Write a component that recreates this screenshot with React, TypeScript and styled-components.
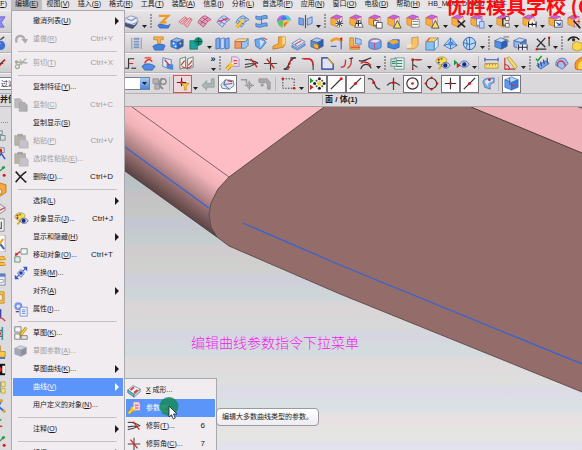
import React, { ReactNode } from 'react';
import styled, { createGlobalStyle, css } from 'styled-components';

const Global = createGlobalStyle`
  * { box-sizing: border-box; }
  body { margin: 0; background: #dad8da; }
  button, select { font: inherit; color: inherit; }
`;

/* ---------- drawing helpers ---------- */

const f = (d: string, fill: string, stroke = 'none') => <path d={d} fill={fill} stroke={stroke} strokeWidth={0.7} />;
const l = (d: string, stroke: string, w = 1.2) => <path d={d} fill="none" stroke={stroke} strokeWidth={w} />;
const dot = (x: number, y: number, r = 1.3, c = '#d81818') => <circle cx={x} cy={y} r={r} fill={c} />;
const cube = (top: string, left: string, right: string, edge = '#4a5a80') => (
  <>
    {f('M2 6 8 3 15 5 9 8Z', top, edge)}
    {f('M2 6 9 8V15L2 12.5Z', left, edge)}
    {f('M9 8 15 5V12L9 15Z', right, edge)}
  </>
);
const mold = (extra: ReactNode) => (
  <>
    {f('M2 5 8 2 14 4 9 7Z', '#cf5edb', '#9a3aa8')}
    {f('M2 5 9 7V15L2 12Z', '#f8ad3c', '#d27a18')}
    {f('M9 7 14 4V12L9 15Z', '#fbe3b4', '#b06ac0')}
    {extra}
  </>
);
const sheet = (a: string, b: string) => (
  <>
    {f('M2 10C5 4 8 3 10 3L16 7C13 8 10 11 8 15Z', a, b)}
    {l('M4 8 11 12M7 5 13 9M5 12C7 8 10 6 13 5', b, 0.8)}
  </>
);

const glyphs: Record<string, ReactNode> = {
  funnel: <>{f('M4 4H16L12 10 15 15H8L9 9Z', '#8f8cf0', '#5a4fd0')}</>,
  ball: <>{dot(11, 11, 5, '#3c6fd0')}{dot(9, 9, 2, '#cfe2ff')}{l('M11 5 15 2', '#445', 1.4)}</>,
  redLine: <>{l('M5 14C10 14 11 8 16 5', '#c81f1f', 1.8)}{l('M7 9H14', '#444')}</>,
  tray: <>{f('M2 10 12 13 17 8 14 13 10 17 2 14Z', '#46557a')}{f('M2 6 8 3 15 5V10L9 12 2 10Z', '#e8edf8', '#6a78a8')}{l('M4 6 9 8 14 5', '#7e8fc5')}</>,
  spring: <>{f('M3 13C7 9 12 16 16 12L14 16H5Z', '#3f82e0', '#2a56a8')}{l('M4 3H14L7 10H12', '#ef9a22', 2.4)}</>,
  ribbonRed: <>{f('M2 9 8 4 11 6 5 12Z', '#f3c3cc', '#c04a60')}{f('M7 12 13 5 16 7 11 15Z', '#f3c3cc', '#c04a60')}{l('M4 10 10 5M9 13 15 6', '#d8445e', 0.8)}</>,
  sheetRed: sheet('#d9a6c8', '#b8304a'),
  sheetBlue: <>{sheet('#c8d2f8', '#5a66c4')}{l('M3 9 14 6', '#e23a3a')}</>,
  sheetWrench: <>{sheet('#a8c8f4', '#3a64b8')}{l('M3 15 8 9', '#c8960f', 3.4)}{l('M3 15 8 9', '#fbd23c', 2)}{dot(9, 8, 2, '#fbd23c')}</>,
  flow: <>{f('M3 3C8 6 11 1 15 3V6C11 5 8 9 3 6Z', '#6aa5ee', '#2f62b0')}{f('M3 11C8 14 11 9 15 11V14C11 13 8 17 3 14Z', '#6aa5ee', '#2f62b0')}{l('M9 5V12', '#e04040', 1)}</>,
  rainbow: <>{f('M2 9C2 4 6 2 10 2L9 8Z', '#b070dc')}{f('M9 8 10 2C14 2 17 5 17 8Z', '#48c4e4')}{f('M2 9 9 8 8 16 4 13Z', '#58c868')}{f('M9 8H17L13 12 8 16Z', '#f3c93a')}{f('M6 5 10 3 13 6 9 8Z', '#4a78e4')}{f('M9 11 14 9 10 15Z', '#ee6a3c')}</>,
  mirror: <>{f('M2 5 7 6V13L2 12Z', '#76a5ec', '#3860b0')}{f('M11 6 16 4V11L11 13Z', '#a8c8f6', '#3860b0')}{l('M9 2V16', '#456')}</>,
  moldFan: mold(<>{dot(11, 11, 3.8, '#fff')}{l('M11 7V15M7 11H15M8 8 14 14M14 8 8 14', '#555', 1.1)}</>),
  moldMan: mold(<>{f('M7 15 10 8H13L16 15Z', '#fff', '#333')}{l('M11 8V14M8 11H14', '#333')}</>),
  moldCopy: mold(<>{f('M7 8H12V13H7Z', '#fff', '#222')}{f('M10 10H16V16H10Z', '#fff', '#222')}</>),
  moldTri: mold(f('M8 16 12 8 16 16Z', '#f5e06a', '#222')),
  moldBox: mold(<>{f('M7 7H15V15H7Z', '#fff', '#666')}{l('M8 9H14M8 12H14', '#888')}</>),
  moldCut: mold(<>{l('M8 8 16 15M16 8 8 15', '#222', 1.6)}</>),
  moldPage: mold(<>{f('M8 6H13V13H8Z', '#e8f1ff', '#4068b0')}{f('M11 9H16V16H11Z', '#bcd4fa', '#4068b0')}</>),
  moldTree: mold(<>{f('M11 4H15V8H11ZM11 11H15V15H11Z', '#fff', '#333')}{l('M8 6V13H11M8 6H11', '#333')}</>),
  moldDim: mold(<>{f('M7 9H17V15H7Z', '#fff')}{l('M8 9V15M16 9V15M8 12H16M12 10V14', '#222')}</>),
  moldWin: mold(<>{f('M8 8H16V15H8Z', '#fff', '#222')}{l('M10 10 14 13M14 10V13H11', '#2850b0')}</>),
  moldMagic: mold(<>{l('M8 8 15 16', '#222', 1.8)}{l('M13 7V11M11 9H15', '#e03030', 0.9)}</>),

  coil: <>{l('M4 3V15M14 3V15', '#9090a8', 1)}{l('M6 4H12M6 7H12M6 10H12M6 13H12', '#7f98c0', 2)}</>,
  punch: <>{f('M3 12C7 9 12 9 16 11L14 16H5Z', '#3f82e0', '#2a56a8')}{f('M4 2H14V5H11V9H8V5H4Z', '#f7b544', '#c07a18')}</>,
  pegCube: <>{cube('#8cbcf6', '#3f86e8', '#2b62c0')}{dot(5, 9, 1, '#fff')}{dot(7, 12, 1, '#fff')}{dot(12, 9, 1, '#fbd850')}</>,
  teal: <>{f('M2 6H10V15H2Z', '#1aa596', '#0c6458')}{dot(11, 7, 4.5, '#10917f')}{l('M11 3V11M7 7H15', '#083f39', 0.8)}</>,
  panels: <>{f('M2 4 6 3V14L2 15Z', '#79acf1', '#2d5db0')}{f('M7 4 11 3V14L7 15Z', '#c1dafb', '#2d5db0')}{f('M12 4 16 3V14L12 15Z', '#79acf1', '#2d5db0')}</>,
  shell: <>{f('M2 6 6 4H16L13 7H2Z', '#fbd6a0', '#b88030')}{f('M2 7H9V14H2Z', '#ee9a60', '#a86030')}{f('M9 7H13L16 4V11L13 14H9Z', '#9cc4f2', '#3e68b0')}</>,
  twist: <>{f('M3 5 11 3 15 8 9 15 4 12Z', '#6fa8f0', '#2f62b0')}{f('M8 5 13 7 9 13Z', '#cfe2fb')}{l('M12 3 16 5', '#e04848')}</>,
  boot: <>{f('M8 2H15V9L13 13 2 15V12L8 9Z', '#f7a83a', '#b86a10')}{f('M12 2H15V9L12 11Z', '#fcd988')}</>,
  slab: <>{f('M2 9 10 4 16 7 8 12Z', '#dbe8fa', '#3e68b0')}{f('M2 11 8 14 16 9V11L8 16 2 13Z', '#86b2ee', '#3e68b0')}{l('M5 10 12 6', '#e04848')}</>,
  block: <>{cube('#a9cdf8', '#4a90e8', '#2b5fb8')}{f('M5 9 10 10V15L5 13Z', '#f8b648', '#a86a18')}</>,
  curveUp: <>{l('M3 7C7 3 11 3 15 7', '#f0a030', 3)}{l('M3 12H9M14 5V15', '#3f6ec8', 1.3)}{dot(14, 4)}</>,
  bracket: <>{f('M3 3H7V11H13V15H3Z', '#f6b048', '#b87820')}{f('M9 3 15 5V10L9 9Z', '#a8ccf6', '#3e68b0')}{l('M4 13 14 13', '#e04848')}</>,
  blueCyl: <>{f('M3 7C4 3 14 3 16 6V13C13 16 6 16 3 13Z', '#6ba3f0', '#2f56a8')}{f('M4 7C6 4 13 4 15 6 13 9 7 9 4 7Z', '#d8e6fb', '#d05070')}{l('M9 9V15', '#d05070')}</>,
  flagCube: <>{f('M3 8 8 5H15V13L10 15 3 13Z', '#4286e0', '#2652a0')}{f('M3 6 12 5 15 8 8 10Z', '#f6a93a')}</>,
  bend: <>{f('M8 3 15 2V10C14 14 9 16 3 14L5 11C8 12 9 9 8 3Z', '#f6c268', '#c08030')}{f('M3 10 8 9V13L3 14Z', '#fbe4b8')}</>,
  pocket: <>{f('M3 7H12V16H3Z', '#8dc0ee', '#306aa8')}{f('M3 7 7 3H16L12 7Z', '#fbcf70', '#c08530')}{f('M12 7 16 3V12L12 16Z', '#d8eafb', '#306aa8')}{l('M4 7 7 3', '#e05050')}</>,
  wedge: <>{f('M2 11 9 3 16 11 9 15Z', '#b8d6f8', '#2e62b0')}{l('M9 3V15M2 11 9 9 16 11', '#2e62b0', 0.9)}{f('M7 7H12V11H7Z', '#4a8ce6')}</>,
  sphere: <><circle cx="9" cy="9" r="6.5" fill="#bcd8f8" stroke="#2e62b0" />{l('M9 2V16M2 8 9 10 16 8M5 4C7 7 7 12 5 14', '#2e62b0', 0.9)}</>,
  offsetCube: <>{cube('#bcd8fa', '#4f90e8', '#2b60b8')}{l('M11 2H17M11 4 17 7', '#888', 1.4)}</>,
  dimCube: <>{cube('#bcd8fa', '#8cb8f2', '#4a80d0')}{f('M6 10H17V16H6Z', '#eef')}{l('M7 10V16M11 10V16M16 10V16M7 13H16', '#223', 1)}</>,
  measureX: <>{l('M3 4 12 13M12 3 3 13', '#333', 1.3)}{l('M3 15H13M16 3V12', '#333')}{dot(16, 3)}{dot(3, 15)}</>,
  eyeCube: <>{l('M2 6C5 1 11 1 14 5', '#222', 1.6)}{dot(8, 5, 1.8, '#333')}{f('M7 9 11 7 17 9V15L12 17 7 15Z', '#fbd64a', '#b08a18')}</>,

  stubs: <>{l('M3 14H8V4H14', '#333')}{l('M8 9H13', '#c83030')}{l('M11 14H16', '#333')}</>,
  stamp: <>{f('M2 12C6 8 12 9 16 12L13 16H5Z', '#4f8ee6', '#25509c')}{l('M5 9C7 4 11 4 13 7', '#d02c2c', 1.4)}{f('M5 2H12V4H5Z', '#eb6a5a')}</>,
  sheetArrow: <>{f('M4 3 13 5V15L4 12Z', '#dfe9fa', '#44598c')}{f('M8 9 15 10V16L8 14Z', '#4888e0')}{l('M6 5 11 11', '#e03434', 1.4)}</>,
  twoSheets: <>{f('M2 4 8 2V13L2 15Z', '#e6f0e4', '#426058')}{f('M10 4 16 2V13L10 15Z', '#e6f0e4', '#426058')}{l('M3 11 7 6M11 11 15 6M4 12C8 15 12 14 15 11', '#d03838')}</>,
  param: <>{f('M8 2H14L16 4V12H8Z', '#f6d3e0', '#8a7ac8')}{l('M10 6H14M10 9H14', '#d04868')}{l('M3 15 8 10', '#b07c08', 4)}{l('M3 15 8 10', '#fbd23c', 2.6)}{dot(8, 10, 2.6, '#f6c62a')}{dot(9, 9, 1, '#fff')}</>,
  trim: <>{l('M2 5C8 4 13 7 16 9M2 10C7 9 12 9 14 9M2 13C8 13 12 10 14 9', '#333', 1.2)}{l('M8 4 15 13', '#e02020', 1.4)}</>,
  trimCorner: <>{l('M2 9H16M9 2V16', '#444', 1.2)}{l('M5 4 13 14', '#e02020', 1.4)}</>,
  divide: <>{l('M3 15C10 15 7 3 15 3', '#333', 1.4)}{l('M10 3H16M3 15H8', '#333')}{dot(9, 9)}{dot(11, 5)}{dot(8, 13)}</>,
  fillet: <>{l('M2 4H8C13 4 14 8 14 16', '#444', 1.2)}{l('M4 4H8C13 4 14 8 14 11', '#e02020', 1.4)}</>,
  chamfer: <>{f('M3 3H9L15 9V15H3Z', '#dfe3f3', '#334')}{l('M3 15V3H9L15 10V15Z', '#3c50b0', 1.2)}{l('M9 3 15 10', '#d8a820', 1.2)}</>,
  stretch: <>{l('M3 13C8 13 8 9 8 5M10 14C15 11 14 7 14 3', '#d03030', 1.4)}{l('M12 4 16 3', '#333')}</>,
  smooth: <>{l('M2 6C7 8 10 4 15 3M4 15C6 9 12 8 15 14', '#333', 1.3)}{l('M4 9C8 6 12 8 15 11', '#e02020', 1.4)}</>,
  sheetList: <>{f('M6 3H16V15H6Z', '#e8f3ee', '#4d786e')}{l('M8 6H14M8 9H14M8 12H14', '#3a8a78')}{f('M2 4H8V12H2Z', '#c8e4da', '#4d786e')}{l('M3 7H7M3 9H7', '#3a8a78')}</>,
  axes: <>{l('M5 15V5H15M5 10 10 13', '#444', 1.2)}{dot(5, 5, 1.6)}{l('M8 5H13', '#d02828', 1.6)}{dot(5, 15, 1)}</>,
  palette: <>{f('M2 6C3 2 9 1 12 3 15 5 13 8 11 8 9 12 3 11 2 6Z', '#f9dc5c', '#a98518')}{dot(5, 5, 1.2)}{dot(8, 4, 1.2, '#2c9c40')}{dot(5, 8, 1.2, '#2a56d0')}{l('M5 15 11 8', '#e0a828', 2.2)}{f('M8 11C10 7 15 7 17 11 15 15 10 15 8 11Z', '#c4d6fb', '#2a3c88')}{dot(12, 11, 2.2, '#1c2c78')}</>,
  eyePlay: <>{f('M1 5 5 8 1 11Z', '#18a038')}{f('M4 8 8 11 4 14Z', '#d02828')}{f('M7 10C9 5 15 5 17 10 15 14 9 14 7 10Z', '#cdd9fa', '#2a3c88')}{dot(12, 10, 2.3, '#1c2c78')}</>,
  ruler: <>{f('M2 9H16V14H2Z', '#f7dc70', '#a88420')}{l('M2 5H16M2 3V7M16 3V7', '#3858b8')}{l('M4 9V11M7 9V11M10 9V11M13 9V11', '#8a6a18', 0.8)}</>,
  angle: <>{l('M3 3V15H14', '#c83030')}{f('M5 3 8 2 16 12 14 15Z', '#f7dc70', '#a88420')}{l('M3 10A5 5 0 0 1 8 15', '#c83030')}</>,
  combCheck: <>{f('M3 11 13 6 16 9 7 15Z', '#7ba8ec', '#2c4a98')}{l('M5 13 4 8M8 12 7 7M11 10 10 5M14 9 14 3', '#2c4a98')}{l('M2 4 4 6 8 1', '#14a030', 1.6)}</>,
  loop: <>{f('M3 11C2 5 8 2 13 4L16 9 10 15Z', '#9cc0f3', '#3458a8')}{l('M5 12C3 6 12 3 13 12', '#d83a4c', 1.5)}</>,
  flame: <>{f('M4 15C1 8 6 4 11 2L12 16Z', '#f49a22', '#d03a18')}{f('M7 15C5 11 8 7 11 6V15Z', '#fbe04a')}</>,

  greyLinks: <>{f('M2 4H8V9H2ZM4 10H9V15H4Z', '#b4b2b4', '#858385')}{l('M12 4A3 5 0 1 0 13 14', '#8d8b8d', 2)}<circle cx="13" cy="7" r="3" fill="none" stroke="#8d8b8d" strokeWidth="1.5" /></>,
  snapFilter: <>{l('M8 3V12M3 8H13', '#333')}{dot(8, 8, 1.6)}{f('M8 9H16L13 12V16H11V12Z', '#f9c930', '#c08a10')}</>,
  undo: <>{f('M2 11 7 6V9H12V4H15V13H7V16Z', '#a6b8b4', '#859894')}</>,
  selCube: <>{f('M2 10 7 5 15 6 16 11 11 15 3 14Z', '#dfe8f8', '#40527c')}{l('M7 5 5 10 11 15M5 10 14 9', '#40527c', 0.9)}{l('M9 6 14 7', '#d83030')}</>,
  target: <>{l('M3 5H9V9M12 6V16M7 11H17', '#9a989a', 1.4)}<circle cx="12" cy="11" r="2.6" fill="none" stroke="#9a989a" /></>,
  turn: <>{f('M2 4H11L14 8V15H11V10L9 8H2Z', '#a9a7a9', '#8d8b8d')}{f('M4 9H7V12H4Z', '#9a989a')}</>,
  marquee: <><rect x="3" y="4" width="12" height="10" fill="none" stroke="#333" strokeDasharray="1.5 1.5" />{dot(3, 4, 1.4)}{dot(15, 14, 1.4)}</>,
  snapAll: <>{f('M1 3 5 6 1 9Z', '#18a038')}{f('M1 10 5 13 1 16Z', '#d02828')}{dot(11, 9, 2.3, '#f0d030')}{dot(11, 4, 1.6, '#222')}{dot(11, 14, 1.6, '#222')}{dot(6, 9, 1.6, '#222')}{dot(16, 9, 1.6, '#222')}{dot(8, 6, 1.1, '#555')}{dot(14, 6, 1.1, '#555')}{dot(8, 12, 1.1, '#555')}{dot(14, 12, 1.1, '#555')}</>,
  endPt: <>{l('M3 15 14 4', '#333', 1.3)}{dot(14, 4, 1.6)}</>,
  midPt: <>{l('M3 15 15 3', '#333', 1.3)}{dot(9, 9, 1.6)}</>,
  ctrlPt: <>{l('M2 4C11 2 7 15 15 15', '#444', 1.3)}{dot(8, 8, 1.6)}</>,
  crossPt: <>{l('M2 11C6 7 11 7 16 11M9 3V16', '#444', 1.3)}{dot(9, 8, 1.6)}</>,
  centerPt: <><circle cx="9" cy="9" r="6" fill="none" stroke="#333" strokeWidth="1.2" />{dot(9, 9, 1.4)}</>,
  quadPt: <><circle cx="9" cy="9" r="5.5" fill="none" stroke="#333" strokeWidth="1.2" />{dot(9, 3)}{dot(9, 15)}{dot(3, 9)}{dot(15, 9)}</>,
  plusPt: <>{l('M3 9H15M9 3V15', '#333', 1.2)}{dot(9, 9, 1.4)}</>,
  facePt: <>{f('M3 7C5 2 11 4 15 3V8C11 9 10 11 11 15L5 13Z', '#7fb0ec', '#3966ac')}{f('M5 7C7 4 11 5 14 5L13 7C10 7 8 9 8 12Z', '#dbe9fb')}{dot(10, 5, 1.4)}</>,
  csysCube: <>{f('M2 5 9 2 16 5 9 8Z', '#aedcf8', '#2a62c0')}{f('M2 5 9 8V16L2 13Z', '#5a9cf2', '#2a62c0')}{f('M9 8 16 5V13L9 16Z', '#3b78dc', '#2a62c0')}{l('M7 3V10L14 12', '#e03030', 1.1)}</>,

  redo: <>{l('M4 13C2 5 10 3 13 9', '#adaaad', 2.6)}{f('M9 9H17L14 14Z', '#adaaad')}</>,
  cut: <>{l('M6 12 15 4M8 5 10 11', '#b0b5a8', 1.6)}<circle cx="5" cy="13" r="2.2" fill="none" stroke="#a4aa9c" strokeWidth="1.4" />{dot(4, 8, 2, '#a4aa9c')}{l('M4 8 16 9', '#a4aa9c', 1.6)}</>,
  copy: <>{f('M2 2H8L10 4V12H2Z', '#bcbabc', '#a5a3a5')}{f('M7 6H13L16 9V16H7Z', '#b1afb1', '#a09ea0')}</>,
  paste: <>{f('M2 3H14V14H2Z', '#b5b4a6', '#a3a297')}{f('M5 1H11V4H5Z', '#a4a2a4')}{f('M7 7H14L17 10V17H7Z', '#c5c3c9', '#a9a7ab')}</>,
  del: <>{l('M3 3C7 7 11 12 15 15M15 3C10 6 6 11 3 15', '#222', 1.8)}</>,
  move: <>{f('M9 2H16V8H9Z', '#f3f6f2', '#355a50')}{f('M2 11H8V17H2Z', '#dcefe4', '#355a50')}{l('M3 9 8 5', '#e02a2a', 1.6)}{f('M2 10 3 6 6 9Z', '#e02a2a')}</>,
  transform: <>{l('M3 15 15 3', '#345ac8', 1.2)}{f('M11 2H16V7ZM2 11V16H7Z', '#345ac8')}{f('M5 9 9 5 13 9 9 14Z', '#c0cdf4', '#3a55b0')}{dot(9, 9, 2, '#2c3f98')}</>,
  props: <>{dot(6, 6, 4.5, '#7d95e6')}{dot(6, 6, 2, '#e4eafc')}{f('M8 7H16V17H8Z', '#f1f4ff', '#4963b8')}{l('M10 10H14M10 12H14M10 14H14', '#5d78cc', 0.9)}{l('M3 12H7', '#456', 1.4)}</>,
  sketch: <>{f('M2 2H9V8H2ZM2 10H8V16H2Z', '#f5f4f6', '#444')}{f('M9 12H16V16H9Z', '#e8e6ea', '#444')}{l('M8 12 15 3', '#a87d12', 3.2)}{l('M9 11 15 3', '#fbd23c', 1.8)}</>,
  sketchParam: cube('#ccd0d8', '#a4a8b2', '#8b8f9c', '#9ea2ac'),
  xform: <>{f('M2 9 8 4 16 8 9 14Z', '#e8f5fa', '#506880')}{f('M2 9 9 14V17L2 12Z', '#54bfd0', '#386070')}{f('M9 14 16 8V11L9 17Z', '#c8d4e0', '#506880')}{l('M5 9 9 6M9 12 13 9', '#e03838', 2)}</>,

  sTree: <>{f('M8 4H13V8H8ZM11 9H16V14H11Z', '#cfe3d8', '#5a7080')}{l('M9 8V12H11', '#b03050')}</>,
  sScreens: <>{f('M7 3H15V8H7Z', '#ffe9a0', '#3858c0')}{dot(11, 6, 2, '#c02c2c')}{l('M8 14 12 9 16 15', '#3858c0', 1.6)}{dot(9, 14, 1.6)}</>,
  sDots: <>{l('M6 11C10 10 12 6 16 4', '#3a8a4a', 1.2)}{dot(14, 5, 1.5, '#18a038')}{dot(9, 13, 1.6)}{dot(15, 13, 1.6)}</>,
  sCube: <>{f('M5 5 10 2 17 4V12L11 16 5 13Z', '#f8a838', '#a86410')}{f('M8 8 12 9V14L8 12Z', '#fff', '#a86410')}</>,
  sPlate: <>{f('M4 9 10 5 16 9V12L10 16 4 12Z', '#eadfe0', '#7e6d70')}{l('M4 9 10 12 16 9', '#b04a50')}</>,
  sFrame: <>{f('M6 2H15V15H6Z', '#f0f0f2', '#666')}{l('M12 5V12H8V7', '#555', 1.2)}</>,
  sTools: <>{f('M3 0H16V18H3Z', '#fafafa', '#888')}{l('M6 3 15 15', '#3c64c8', 2.2)}{l('M14 4 7 14', '#f0a828', 2.4)}</>,
  sWave: <>{l('M5 6C9 2 11 8 16 5M5 12C9 8 11 14 16 11', '#c07c10', 4)}{l('M5 6C9 2 11 8 16 5M5 12C9 8 11 14 16 11', '#fbbf3a', 2.6)}</>,
  sWin: <>{f('M5 3H16V15H5Z', '#e4e9f4', '#5a6a90')}{f('M5 3H16V6H5Z', '#5a7ec8')}{f('M8 9H14V12H8Z', '#fff', '#888')}</>,
  sRing: <>{f('M6 3H15V15H6Z', '#fbc23c', '#b07c10')}{f('M9 6H13V12H9Z', '#f2eee8', '#b07c10')}</>,
  sMark: <>{f('M7 3 12 2V12H7Z', '#3a48a8')}{l('M6 14C10 9 14 12 16 15', '#d04050', 1.6)}</>,
  sTeal: <>{l('M7 2V16M13 2V16', '#3a9aa8', 1.8)}{l('M7 6H13M7 12H13', '#667')}{dot(10, 9, 1.6)}</>,
  sStep: <>{f('M6 3H11V9H16V15H6Z', '#fbc84a', '#a87c18')}{l('M6 16H16', '#3a60c0', 1.6)}</>,
  sBlack: <>{f('M4 3H16V15H4Z', '#111')}{dot(10, 9, 2.6, '#e02828')}{f('M13 5H16V13H13Z', '#eee')}</>,
  sTag: <>{f('M6 3H11V14H6Z', '#e2e8e0', '#6a7868')}{f('M12 3H16V8H12ZM12 10H16V15H12Z', '#f6e37c', '#a89a40')}</>,
  sZig: <>{l('M5 4H12L9 10 15 15', '#2f70d8', 2)}{dot(12, 4, 1.7, '#f0a020')}{dot(15, 15, 1.7, '#f0a020')}</>,
  sPin: <>{l('M6 6 12 5', '#2fa048', 1.8)}{l('M7 12H13', '#c83838', 1.6)}</>,
};

const IconSvg = styled.svg`
  display: block;
  flex: none;
  width: 18px;
  height: 18px;
`;
const Icon = ({ name }: { name: string }) => (
  <IconSvg viewBox="0 0 18 18" aria-hidden="true">{glyphs[name]}</IconSvg>
);

/* ---------- frame ---------- */

const Page = styled.div`
  position: relative;
  display: flex;
  flex-direction: column;
  height: 100vh;
  overflow: hidden;
  background: #dad8da;
  color: #1c1a1c;
  font: 7px/10px 'Liberation Sans', 'Noto Sans CJK SC', sans-serif;
`;

const MenuBar = styled.nav`
  display: flex;
  flex: none;
  height: 10px;
  margin-left: -20px;
  background: #e6e4e6;
  white-space: nowrap;
`;
const MenuBarItem = styled.button<{ $open?: boolean }>`
  flex: none;
  height: 10px;
  padding: 0 4px 3px;
  border: 0;
  line-height: 7px;
  background: ${p => (p.$open ? '#bfbdc0' : 'transparent')};
`;

const Bar = styled.div<{ $tall?: boolean }>`
  display: flex;
  flex: none;
  align-items: center;
  height: ${p => (p.$tall ? 23 : 20)}px;
  border-bottom: 1px solid #b4b2b5;
  border-top: 1px solid #f2f1f3;
  background: linear-gradient(#e6e4e7, #cfcdd0);
`;
const FilterBar = styled(Bar)`
  height: 21px;
  background: #dad8da;
`;
const ToolButton = styled.button<{ $look?: 'box' | 'red' }>`
  display: flex;
  flex: none;
  align-items: center;
  justify-content: center;
  width: 19px;
  height: 18px;
  padding: 0;
  border: 0;
  background: transparent;

  svg { width: 17px; height: 17px; }
  ${p => p.$look === 'box' && css`background: #fbfbfc; box-shadow: inset 0 0 0 1px #77757a;`}
  ${p => p.$look === 'red' && css`background: #efd9dc; box-shadow: inset 0 0 0 1px #d8525c;`}
`;
const Lead = styled.div<{ $rest: number }>`
  display: flex;
  flex: none;
  width: ${p => p.$rest}px;
  overflow: hidden;
  & > button { margin-left: -11px; }
`;
const Space = styled.span`
  flex: none;
  width: 3px;
`;
const Divider = styled.span`
  flex: none;
  width: 4px;
  height: 14px;
  border-left: 1px solid #b9b7ba;
`;
const Grip = styled.span`
  flex: none;
  width: 6px;
  height: 15px;
  background: radial-gradient(circle at 1px 1px, #98969a 1px, transparent 1px) 2px 0 / 3px 3px repeat-y;
`;
const Drop = styled.button`
  display: flex;
  flex: none;
  align-items: flex-end;
  justify-content: center;
  width: 7px;
  height: 12px;
  padding: 0;
  border: 0;
  background: transparent;
`;
const Overflow = styled(Drop)`
  flex-direction: column;
  align-items: center;
  justify-content: space-between;
  width: 8px;
  height: 15px;
  margin-left: 13px;
  font: bold 9px/7px 'Liberation Sans', sans-serif;
`;
const TinySvg = styled.svg`
  display: block;
  width: 5px;
  height: 3px;
`;
const Down = () => <TinySvg viewBox="0 0 5 3" aria-hidden="true"><path d="M0 0H5L2.5 3Z" fill="#222" /></TinySvg>;

const Tools = ({ items }: { items: string }) => (
  <>
    {items.split(' ').map((t, i) => {
      if (t === '_') return <Space key={i} />;
      if (t === '|') return <Divider key={i} />;
      if (t === ':') return <Grip key={i} />;
      if (t === 'v') return <Drop key={i} aria-label="more"><Down /></Drop>;
      if (t === '>>') return <Overflow key={i} aria-label="overflow"><span>»</span><Down /></Overflow>;
      const look = t[0] === '+' ? 'box' : t[0] === '!' ? 'red' : undefined;
      const name = look ? t.slice(1) : t;
      return <ToolButton key={i} $look={look} aria-label={name}><Icon name={name} /></ToolButton>;
    })}
  </>
);

const FilterBox = styled.label`
  position: relative;
  flex: none;
  width: 150px;
`;
const FilterSelect = styled.select`
  appearance: none;
  display: block;
  width: 100%;
  height: 13px;
  padding: 0 1px;
  border: 1px solid #77809a;
  border-left: 0;
  border-radius: 0;
  background: #fff;
  line-height: 10px;
`;
const FilterArrow = styled.span`
  position: absolute;
  right: 1px;
  top: 1px;
  display: flex;
  align-items: center;
  justify-content: center;
  width: 9px;
  height: 11px;
  background: linear-gradient(#a8ccf6, #4a86d6);
  pointer-events: none;
`;

const StatusRow = styled.div`
  display: flex;
  flex: none;
  align-items: center;
  height: 13px;
  background: #dcdadc;
  border-bottom: 1px solid #a6a4a7;
  font-weight: bold;
  font-size: 8px;
`;
const Prompt = styled.span`
  width: 322px;
`;
const Status = styled.output`
  padding-left: 2px;
  border-left: 1px solid #b4b2b5;
`;

/* ---------- work area ---------- */

const Work = styled.main`
  display: flex;
  flex: 1;
  min-height: 0;
`;
const Strip = styled.aside`
  display: flex;
  flex: none;
  flex-direction: column;
  justify-content: space-between;
  align-items: flex-end;
  width: 11px;
  padding-top: 5px;
  padding-right: 3px;
  overflow: hidden;
  background: #dddbdd;

  & > button { height: 16px; }
`;
const StripGrip = styled.span`
  flex: none;
  width: 10px;
  margin: 10px 0 2px;
  border-top: 1px dotted #8a888c;
`;
const View = styled.section`
  position: relative;
  flex: 1;
  min-width: 0;
  background:
    repeating-linear-gradient(
      rgba(206, 208, 255, 0.2) 0 12px, rgba(190, 226, 236, 0.2) 12px 26px,
      rgba(246, 216, 224, 0.16) 26px 40px, rgba(222, 226, 214, 0.16) 40px 54px,
      rgba(206, 208, 255, 0.2) 54px 56px),
    linear-gradient(#a2a7aa, #b6babc 21%, #c7c8c8 39%, #d3d3d4 56%, #dcdcdd 77%, #e8e7e8);
`;
const Model = styled.svg`
  display: block;
  width: 100%;
  height: 100%;
`;
const Caption = styled.p`
  position: absolute;
  left: 180px;
  top: 225px;
  margin: 0;
  color: #ee22ee;
  font: 300 14px/20px 'Noto Sans CJK SC', sans-serif;
  white-space: nowrap;
`;
const Banner = styled.strong`
  position: absolute;
  left: 446px;
  top: -9px;
  color: #fb0d10;
  font: bold 20px/29px 'Noto Sans CJK SC', sans-serif;
  white-space: pre;
`;

/* ---------- menus ---------- */

const Menu = styled.ul`
  position: absolute;
  left: 11px;
  top: 10px;
  width: 114px;
  margin: 0;
  padding: 1px;
  border: 1px solid #aaa8ac;
  background: #f0ecf0;
  list-style: none;
`;
const SubMenu = styled(Menu)`
  left: 111px;
  top: 0;
  width: 93px;
  padding: 2px 1px;
`;
const Item = styled.li`
  position: relative;
`;
const Rule = styled.li`
  height: 6px;
  margin: 0 6px 0 5px;
  padding-top: 3px;

  &::after {
    content: '';
    display: block;
    border-top: 1px solid #c4c1c5;
  }
`;
const Entry = styled.button<{ $active?: boolean }>`
  display: grid;
  grid-template-columns: 18px 1fr auto 6px;
  align-items: center;
  width: 100%;
  height: 18px;
  padding: 0 4px 0 0;
  border: 0;
  text-align: left;
  white-space: nowrap;
  color: ${p => (p.$active ? '#fff' : '#1c1a1c')};
  background: ${p => (p.$active ? '#5b95fa' : 'transparent')};

  &:disabled { color: #a29fa3; }

  & > ${IconSvg} {
    width: 16px;
    height: 16px;
  }
`;
const Label = styled.span`
  padding-left: 2px;
`;
const Keys = styled.kbd`
  font: 8px/10px 'Liberation Sans', sans-serif;
`;
const Caret = styled.svg`
  width: 4px;
  height: 8px;
  justify-self: end;
`;
const Tip = styled.div`
  position: absolute;
  left: 91px;
  top: 29px;
  width: max-content;
  padding: 3px 5px;
  border: 1px solid #9b999d;
  border-radius: 4px;
  background: linear-gradient(#fff, #eeecf1);
  color: #222;
`;
const Pointer = styled.svg`
  position: absolute;
  left: 34px;
  top: 17px;
  width: 20px;
  height: 24px;
  pointer-events: none;
`;

type Row = { t: string; k?: string; icon?: string; off?: boolean; more?: boolean; keys?: string; sub?: boolean; dots?: boolean } | null;

const rows: Row[] = [
  { t: '撤消列表', k: 'U', more: true },
  { t: '重做', k: 'R', icon: 'redo', off: true, keys: 'Ctrl+Y' },
  null,
  { t: '剪切', k: 'T', icon: 'cut', off: true, keys: 'Ctrl+X' },
  null,
  { t: '复制特征', k: 'Y', dots: true },
  { t: '复制', k: 'C', icon: 'copy', off: true, keys: 'Ctrl+C' },
  { t: '复制显示', k: 'S' },
  { t: '粘贴', k: 'P', icon: 'paste', off: true, keys: 'Ctrl+V' },
  { t: '选择性粘贴', k: 'E', icon: 'paste', off: true, dots: true },
  { t: '删除', k: 'D', icon: 'del', dots: true, keys: 'Ctrl+D' },
  null,
  { t: '选择', k: 'L', more: true },
  { t: '对象显示', k: 'J', icon: 'palette', dots: true, keys: 'Ctrl+J' },
  { t: '显示和隐藏', k: 'H', more: true },
  { t: '移动对象', k: 'O', icon: 'move', dots: true, keys: 'Ctrl+T' },
  { t: '变换', k: 'M', icon: 'transform', dots: true },
  { t: '对齐', k: 'A', more: true },
  { t: '属性', k: 'I', icon: 'props', dots: true },
  null,
  { t: '草图', k: 'K', icon: 'sketch', dots: true },
  { t: '草图参数', k: 'A', icon: 'sketchParam', off: true, dots: true },
  { t: '草图曲线', k: 'K', dots: true, more: true },
  { t: '曲线', k: 'V', more: true, sub: true },
  { t: '用户定义的对象', k: 'N', dots: true },
  null,
  { t: '注释', k: 'O', more: true },
  null,
  { t: '特征', k: 'F', more: true },
];

const Name = ({ t, k, dots }: { t: string; k?: string; dots?: boolean }) => (
  <Label>{t}{k && <>(<u>{k}</u>)</>}{dots && '...'}</Label>
);

const CurveMenu = () => (
  <SubMenu>
    <Item><Entry><Icon name="xform" /><Label><u>X</u> 成形...</Label></Entry></Item>
    <Item><Entry $active><Icon name="param" /><Name t="参数" k="P" dots /></Entry></Item>
    <Item><Entry><Icon name="trim" /><Name t="修剪" k="T" dots /><Keys>6</Keys></Entry></Item>
    <Item><Entry><Icon name="trimCorner" /><Name t="修剪角" k="C" dots /><Keys>7</Keys></Entry></Item>
    <Pointer viewBox="0 0 20 24" aria-hidden="true">
      <circle cx="10" cy="10.5" r="9.5" fill="#158a58" fillOpacity="0.85" />
      <path d="M10 10V21L12.5 18.8 14.3 23 16.3 22 14.5 18H18Z" fill="#fff" stroke="#222" strokeWidth="0.8" />
    </Pointer>
    <Tip role="tooltip">编辑大多数曲线类型的参数。</Tip>
  </SubMenu>
);

const menus: [string, string?][] = [
  ['文件', 'F'], ['编辑', 'E'], ['视图', 'V'], ['插入', 'S'], ['格式', 'R'], ['工具', 'T'], ['装配', 'A'], ['信息', 'I'],
  ['分析', 'L'], ['首选项', 'P'], ['应用', 'N'], ['窗口', 'O'], ['电极', 'D'], ['帮助', 'H'], ['HB_MOULD M6.6'], ['软件'],
];

const strip = 'sTree sScreens sDots sCube sPlate sFrame sTools sWave sWin sRing sMark sTeal sStep sBlack sTag sZig sPin sDots';

export default function App() {
  return (
    <Page lang="zh-CN">
      <Global />
      <MenuBar>
        {menus.map(([t, k]) => (
          <MenuBarItem key={t} $open={k === 'E'}>{t}{k && <>(<u>{k}</u>)</>}</MenuBarItem>
        ))}
      </MenuBar>
      <Bar $tall>
        <Lead $rest={122}><Tools items="funnel" /></Lead>
        <Tools items="tray v : spring _ ribbonRed sheetRed sheetBlue sheetWrench flow _ rainbow _ mirror v : moldFan moldMan moldCopy moldTri moldBox moldTri v moldCut moldPage v moldTree v moldDim v moldWin moldMagic" />
      </Bar>
      <Bar>
        <Lead $rest={127}><Tools items="ball" /></Lead>
        <Tools items="coil _ punch pegCube teal v panels shell twist boot slab block curveUp bracket blueCyl flagCube bend pocket wedge sphere v : offsetCube dimCube _ measureX v : eyeCube" />
      </Bar>
      <Bar>
        <Lead $rest={120}><Tools items="redLine" /></Lead>
        <Tools items="stubs stamp sheetArrow twoSheets >> : param trim trimCorner divide fillet chamfer stretch smooth v : sheetList axes v palette eyePlay v | ruler angle v : combCheck loop flame" />
      </Bar>
      <FilterBar>
        <FilterBox>
          <FilterSelect aria-label="过滤器" defaultValue="a"><option value="a">过滤器</option></FilterSelect>
          <FilterArrow><Down /></FilterArrow>
        </FilterBox>
        <Tools items="greyLinks | !snapFilter v undo +selCube target turn | marquee v _ +snapAll +endPt +midPt ctrlPt crossPt +centerPt quadPt +plusPt +midPt facePt | +csysCube" />
      </FilterBar>
      <StatusRow>
        <Prompt>并使用</Prompt>
        <Status>面 / 体(1)</Status>
      </StatusRow>
      <Work>
        <Strip>
          <StripGrip />
          <Tools items={strip} />
        </Strip>
        <View>
          <Model viewBox="11 107 571 343" preserveAspectRatio="xMinYMin slice" role="img" aria-label="model">
            <defs>
              <linearGradient id="round" gradientUnits="userSpaceOnUse" x1="132" y1="107" x2="99" y2="152">
                <stop offset="0" stopColor="#febdc4" />
                <stop offset="0.25" stopColor="#f0b2b7" />
                <stop offset="0.5" stopColor="#bd8d90" />
                <stop offset="0.72" stopColor="#916a6b" />
                <stop offset="0.9" stopColor="#6c5050" />
                <stop offset="1" stopColor="#5a4343" />
              </linearGradient>
            </defs>
            <path d="M11 107H132L229 177 218 189 211 203 209 215 211 227 217 237 11 89Z" fill="url(#round)" />
            <path d="M131 107H324L229 177Z" fill="#febdc5" />
            <path d="M471 107H582V153L575 150Z" fill="#eeb0b6" />
            <path d="M577 107H582V109Z" fill="#7c6a6c" />
            <path d="M324 107H471L582 153V392L340 294 229 246 217 237 211 227 209 215 211 203 218 189 229 177Z" fill="#946d6a" />
            <g fill="none" stroke="#4c3c3c" strokeWidth="1">
              <path d="M132 107 229 177" strokeWidth="0.7" />
              <path d="M471 107 582 153" />
              <path d="M324 107 229 177 218 189 211 203 209 215 211 227 217 237 229 246 340 294 582 392" strokeWidth="0.8" />
              <path d="M125 171 217 237" />
            </g>
            <path d="M125 147 209 208M243 223 340 265 582 364" fill="none" stroke="#3463d4" strokeWidth="1.2" />
          </Model>
          <Caption>编辑曲线参数指令下拉菜单</Caption>
        </View>
      </Work>
      <Banner>优胜模具学校 (C</Banner>
      <Menu>
        {rows.map((r, i) =>
          r === null ? <Rule key={i} role="separator" /> : (
            <Item key={i}>
              <Entry disabled={r.off} $active={r.sub}>
                {r.icon ? <Icon name={r.icon} /> : <span />}
                <Name t={r.t} k={r.k} dots={r.dots} />
                {r.keys ? <Keys>{r.keys}</Keys> : <span />}
                {r.more && <Caret viewBox="0 0 4 8" aria-hidden="true"><path d="M0 0V8L4 4Z" fill="currentColor" /></Caret>}
              </Entry>
              {r.sub && <CurveMenu />}
            </Item>
          ),
        )}
      </Menu>
    </Page>
  );
}
